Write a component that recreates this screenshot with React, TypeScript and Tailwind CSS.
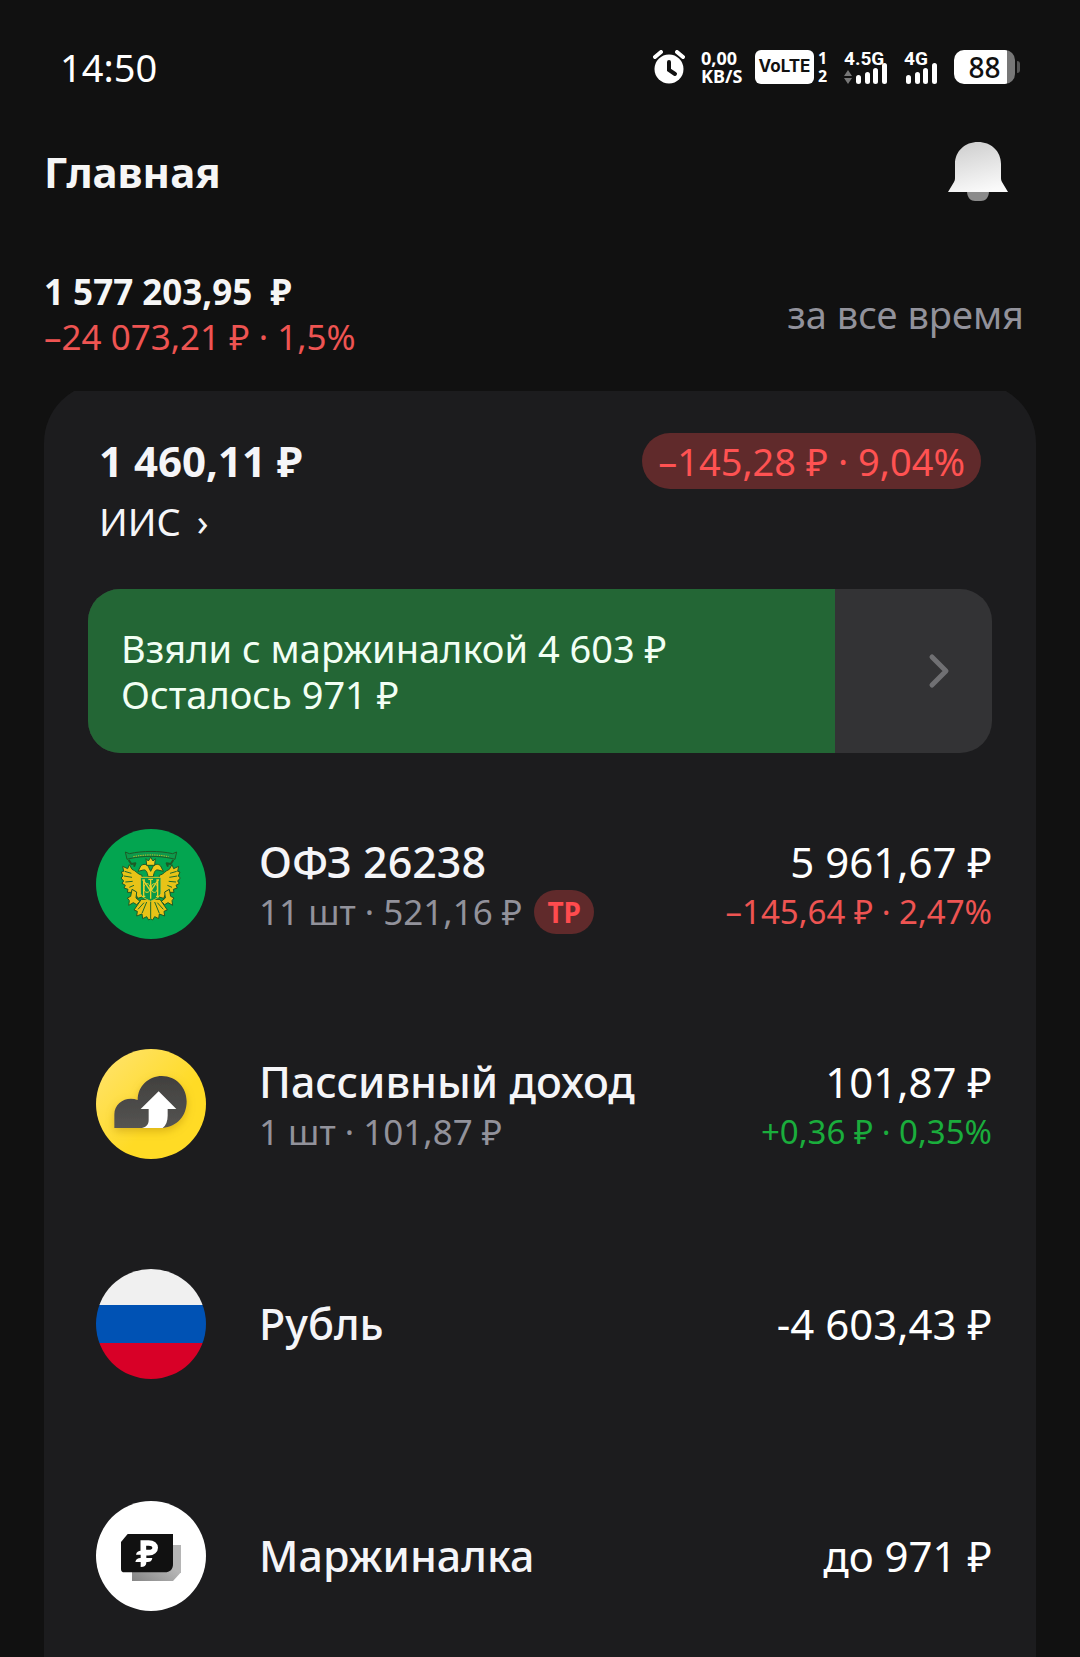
import type { ReactNode } from 'react'

type Asset = {
  name: string
  amount: string
  details?: string
  badge?: string
  change?: string
  positive?: boolean
  icon: ReactNode
}

const MARGIN_USED = 4603
const MARGIN_LEFT = 971

function BondIcon() {
  return (
    <svg viewBox="48 57 330 330" className="size-[110px] shrink-0" aria-hidden="true">
      <circle cx="213" cy="222" r="165" fill="#03a550" />
      <g stroke="#1d5a26" strokeWidth="3" strokeLinejoin="round">
        {/* ribbon */}
        <path d="M136 126l12 5c40-9 90-9 130 0l12-5-5 22-12-3c-38-8-82-8-120 0l-12 3z" fill="#0d9a4c" />
        <path d="M146 150l8 12 12-2-4 10M280 150l-8 12-12-2 4 10" fill="none" strokeWidth="6" />
        {/* wings */}
        <path d="M186 196c-12-2-18-14-30-18l-8-14-5 12-15-7 3 15-7 2 5 12-6 6 8 9-5 7 10 6-4 8 12 4-2 9 12 0 1 10 12-6 6 14 14-4z" fill="#e8c317" />
        <path d="M238 196c12-2 18-14 30-18l8-14 5 12 15-7-3 15 7 2-5 12 6 6-8 9 5 7-10 6 4 8-12 4 2 9-12 0-1 10-12-6-6 14-14-4z" fill="#e8c317" />
        {/* heads */}
        <path d="M204 200c-2-14-6-22-14-20l-16 4 8-16c8-8 20-6 24 4l6 12 6-12c4-10 16-12 24-4l8 16-16-4c-8-2-12 6-14 20z" fill="#efc91a" />
        <path d="M198 146l7 7 7-11 7 11 7-7-2 20h-24z" fill="#f0cd20" />
        {/* claws and tail */}
        <path d="M156 238l14 8-2 18 12 10-10 10-10-6-14 8 2-14-6-8 10-5z" fill="#e8c317" />
        <path d="M268 238l-14 8 2 18-12 10 10 10 10-6 14 8-2-14 6-8-10-5z" fill="#e8c317" />
        <path d="M184 268l-22 32 10 4-2 14 16-6 2 14 12-6 6 10 6-4 6 4 6-10 12 6 2-14 16 6-2-14 10-4-22-32z" fill="#e8c317" />
      </g>
      <path d="M212 272v52M200 276l-14 34M224 276l14 34M192 278l-18 20M232 278l18 20" stroke="#1d6a2c" strokeWidth="3" fill="none" />
      <path d="M154 190l-20-6M156 202l-24-4M158 214l-22 2M162 226l-14 6M270 190l20-6M268 202l24-4M266 214l22 2M262 226l14 6" stroke="#1d6a2c" strokeWidth="3" />
      <path d="M160 140c35-7 70-7 106 0" stroke="#c9bd28" strokeWidth="3" strokeDasharray="4 3" fill="none" />
      {/* shield with monogram */}
      <path d="M181 202h62v44c0 14-14 20-31 28-17-8-31-14-31-28z" fill="#07994a" stroke="#e0c42a" strokeWidth="3" />
      <path d="M191 210v48M233 210v48M187 210h8M229 210h8M187 259h9M228 259h9M191 212l21 32 21-32M212 206v60M205 208h14" stroke="#e8d02a" strokeWidth="4" fill="none" />
      <ellipse cx="201" cy="234" rx="9" ry="13" fill="none" stroke="#e8d02a" strokeWidth="3" />
      <ellipse cx="223" cy="234" rx="9" ry="13" fill="none" stroke="#e8d02a" strokeWidth="3" />
    </svg>
  )
}

function FundIcon() {
  return (
    <svg viewBox="48 57 330 330" className="size-[110px] shrink-0" aria-hidden="true">
      <defs>
        <linearGradient id="fund-bg" x1="0" y1="0" x2="1" y2="1">
          <stop offset="0.1" stopColor="#ffe266" />
          <stop offset="0.6" stopColor="#ffdb25" />
        </linearGradient>
        <linearGradient id="fund-cloud" x1="0" y1="0" x2="0" y2="1">
          <stop offset="0" stopColor="#41403e" />
          <stop offset="1" stopColor="#555452" />
        </linearGradient>
        <filter id="fund-shadow" x="-20%" y="-20%" width="140%" height="150%">
          <feDropShadow dx="0" dy="10" stdDeviation="12" floodColor="#a87b00" floodOpacity="0.4" />
        </filter>
      </defs>
      <circle cx="213" cy="222" r="165" fill="url(#fund-bg)" />
      <path
        d="M103 294v-40c0-38 38-56 70-44 0-42 33-72 73-72 42 0 74 34 74 76 0 44-28 76-72 80z"
        fill="url(#fund-cloud)"
        filter="url(#fund-shadow)"
      />
      <path d="M236 184l53 53h-26v20c0 16-5 29-15 37h-62c13-3 20-11 20-24v-33h-24z" fill="#fff" />
    </svg>
  )
}

function RubleIcon() {
  return (
    <svg viewBox="0 0 110 110" className="size-[110px] shrink-0 rounded-full" aria-hidden="true">
      <path d="M0 0h110v36H0z" fill="#f0f0f0" />
      <path d="M0 36h110v38H0z" fill="#0052b4" />
      <path d="M0 74h110v36H0z" fill="#d80027" />
    </svg>
  )
}

function MarginIcon() {
  return (
    <svg viewBox="48 63 330 330" className="size-[110px] shrink-0" aria-hidden="true">
      <defs>
        <linearGradient id="margin-back" x1="0" y1="1" x2="1" y2="0">
          <stop offset="0" stopColor="#858585" />
          <stop offset="0.6" stopColor="#b5b5b5" />
        </linearGradient>
      </defs>
      <circle cx="213" cy="228" r="165" fill="#fff" />
      <path d="M156 195h147v82l-24 26H156z" fill="url(#margin-back)" />
      <path d="M143 162h136v90c0 16-9 25-25 25H134c-8 0-11-3-11-11v-80z" fill="#111" />
      <path d="M190 222v-33h16c26 0 26 29 0 29h-14" fill="none" stroke="#fff" strokeWidth="17" />
      <path d="M168 224c2-9 7-12 15-12h20c-2 9-6 12-14 12zM166 246c2-9 7-12 15-12h36c-2 9-6 12-14 12zM182 222h17v26c0 8-6 13-17 13z" fill="#fff" />
    </svg>
  )
}

function SignalBars() {
  return (
    <svg viewBox="0 0 32 21" className="h-[21px] w-8" fill="#fff" aria-hidden="true">
      <rect x="0" y="12" width="5" height="9" rx="2.5" />
      <rect x="9" y="9" width="5" height="12" rx="2.5" />
      <rect x="17" y="5" width="5" height="16" rx="2.5" />
      <rect x="26" y="0" width="5" height="21" rx="2.5" />
    </svg>
  )
}

function StatusBar() {
  return (
    <div className="flex h-9 items-center justify-between pl-4 pr-4">
      <time className="text-[38px] leading-9">14:50</time>
      <div className="flex h-[34px] items-center font-bold">
        <svg viewBox="0 0 32 34" className="mr-4 h-[34px] w-8" aria-label="Будильник">
          <circle cx="16" cy="19" r="14.5" fill="#fff" />
          <path d="M2 7l6-5M30 7l-6-5" stroke="#fff" strokeWidth="4" strokeLinecap="round" />
          <path d="M16 12v8l6 4" stroke="#111" strokeWidth="4" fill="none" strokeLinecap="round" />
        </svg>
        <div className="mr-[14px] w-10 text-[18px] leading-[18px]">
          <div>0,00</div>
          <div>KB/S</div>
        </div>
        <span className="flex h-[34px] w-[59px] items-center justify-center rounded-md bg-white font-['Inter',sans-serif] text-[17px] text-[#111]">
          VoLTE
        </span>
        <div className="ml-1 mr-[18px] w-2 text-[16px] leading-[18px]">
          <div>1</div>
          <div>2</div>
        </div>
        <div className="mr-4 flex w-11 flex-col font-['Roboto',sans-serif] text-[19px] leading-[15px]">
          <span>4.5G</span>
          <div className="-mt-[3px] flex items-end">
            <svg viewBox="0 0 12 14" className="h-3.5 w-3" fill="#777" aria-hidden="true">
              <path d="M4 0l4 6H0zM4 14l4-6H0z" />
            </svg>
            <SignalBars />
          </div>
        </div>
        <div className="mr-4 flex w-[34px] flex-col font-['Roboto',sans-serif] text-[19px] leading-[15px]">
          <span>4G</span>
          <div className="-mt-[3px] pl-0.5">
            <SignalBars />
          </div>
        </div>
        <span className="flex h-[34px] w-[61px] items-center justify-center rounded-[10px] bg-linear-to-r from-white from-[87%] to-[#777] to-[87%] text-[28px] font-medium text-[#111]">
          88
        </span>
        <span className="ml-0.5 h-3 w-[3px] rounded-r-sm bg-[#555]" />
      </div>
    </div>
  )
}

const assets: Asset[] = [
  {
    name: 'ОФЗ 26238',
    amount: '5 961,67 ₽',
    details: '11 шт · 521,16 ₽',
    badge: 'ТР',
    change: '–145,64 ₽ · 2,47%',
    icon: <BondIcon />,
  },
  {
    name: 'Пассивный доход',
    amount: '101,87 ₽',
    details: '1 шт · 101,87 ₽',
    change: '+0,36 ₽ · 0,35%',
    positive: true,
    icon: <FundIcon />,
  },
  { name: 'Рубль', amount: '-4 603,43 ₽', icon: <RubleIcon /> },
]

function AssetRow({ asset }: { asset: Asset }) {
  return (
    <li className="flex h-[110px] items-center pl-2">
      {asset.icon}
      <div className={`ml-[53px] flex-1 whitespace-nowrap ${asset.details ? 'pt-1.5' : ''}`}>
        <div className="flex justify-between text-[42px] leading-[50px]">
          <span className="text-[43px] font-medium text-[#f5f5f8]">{asset.name}</span>
          <span>{asset.amount}</span>
        </div>
        {asset.details && (
          <div className="flex h-[50px] items-center justify-between">
            <span className="flex items-center text-[35px] leading-[50px] text-[#92929b]">
              {asset.details}
              {asset.badge && (
                <span className="ml-3 flex h-11 w-[60px] items-center justify-center rounded-full bg-[#602a2b] text-[28px] font-bold text-[#ff4b4e]">
                  {asset.badge}
                </span>
              )}
            </span>
            <span className={`text-[33px] leading-[50px] ${asset.positive ? 'text-[#1aad3c]' : 'text-[#ee5452]'}`}>
              {asset.change}
            </span>
          </div>
        )}
      </div>
    </li>
  )
}

export default function App() {
  const progress = (MARGIN_USED / (MARGIN_USED + MARGIN_LEFT)) * 100

  return (
    <div className="flex min-h-screen flex-col bg-[#111] px-11 pt-[49px] font-['Noto_Sans',sans-serif] text-white">
      <StatusBar />

      <header className="mt-[57px] flex h-[60px] items-center justify-between pr-7">
        <h1 className="text-[42px] font-bold leading-[60px] text-[#f6f6f6]">Главная</h1>
        <button aria-label="Уведомления">
          <svg viewBox="0 0 60 60" className="size-[60px]" aria-hidden="true">
            <defs>
              <linearGradient id="bell" x1="0.3" y1="0" x2="0.6" y2="1">
                <stop offset="0" stopColor="#cfcfcf" />
                <stop offset="1" stopColor="#fafafa" />
              </linearGradient>
            </defs>
            <path d="M19 46h22v3c0 7-4 10-8 10h-6c-4 0-8-3-8-10z" fill="#8a8a8a" />
            <path d="M0 50l6-10c1-2 1-3 1-5V22C7 9 17 0 30 0s23 9 23 22v13c0 2 0 3 1 5l6 10z" fill="url(#bell)" />
          </svg>
        </button>
      </header>

      <section className="mt-[67px] flex items-center justify-between pr-3">
        <div className="leading-[45px]">
          <div className="whitespace-pre text-[35px] font-bold text-[#f6f6f6]">1 577 203,95  ₽</div>
          <div className="text-[35px] text-[#ee5452]">–24 073,21 ₽ · 1,5%</div>
        </div>
        <div className="text-[38px] leading-[45px] text-[#92929b]">за все время</div>
      </section>

      {/* the card's top edge is cut by the scroll area */}
      <main className="mt-8 flex flex-1 flex-col overflow-hidden">
        <div className="-mt-2 flex-1 rounded-t-[60px] bg-[#1c1c1e] px-11 pb-[46px] pt-[50px]">
          <div className="flex items-center justify-between px-[11px]">
            <div className="text-[42px] font-bold leading-[56px] text-[#f5f5f8]">1 460,11 ₽</div>
            <div className="rounded-full bg-[#602a2b] px-4 text-[38px] leading-[56px] text-[#ff5252]">
              –145,28 ₽ · 9,04%
            </div>
          </div>
          <a href="#iis" className="flex gap-4 pl-[11px] text-[38px] leading-[64px] text-[#f5f5f8]">
            <span>ИИС</span>
            <span>›</span>
          </a>

          <button className="relative mt-9 flex h-[164px] w-full items-center justify-between overflow-hidden rounded-[32px] bg-[#333335] pl-[33px] pr-10 text-left">
            <span className="absolute inset-y-0 left-0 bg-[#236635]" style={{ width: `${progress}%` }} />
            <span className="relative text-[38px] leading-[46px] text-[#f2fff4]">
              Взяли с маржиналкой 4 603 ₽
              <br />
              Осталось 971 ₽
            </span>
            <svg viewBox="0 0 24 36" className="relative h-9 w-6" fill="none" aria-hidden="true">
              <path d="M4 4l14 14L4 32" stroke="#707073" strokeWidth="5" strokeLinecap="round" strokeLinejoin="round" />
            </svg>
          </button>

          <ul className="mt-[76px] flex flex-col gap-[110px]">
            {assets.map(asset => (
              <AssetRow key={asset.name} asset={asset} />
            ))}
          </ul>
          <ul className="mt-[122px]">
            <AssetRow asset={{ name: 'Маржиналка', amount: 'до 971 ₽', icon: <MarginIcon /> }} />
          </ul>
        </div>
      </main>
    </div>
  )
}
